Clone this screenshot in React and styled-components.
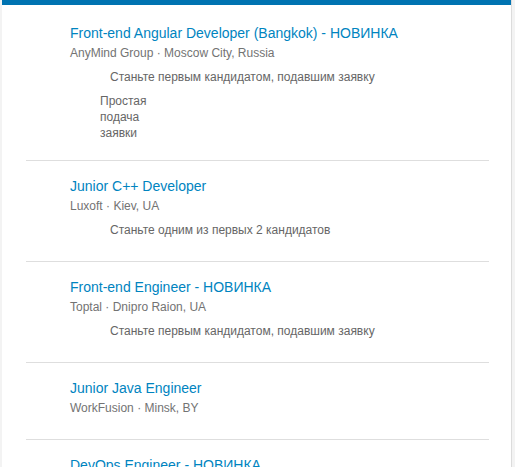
import React from 'react';
import styled, { createGlobalStyle } from 'styled-components';

const GlobalStyle = createGlobalStyle`
  html, body {
    margin: 0;
    padding: 0;
    background: #f3f3f3;
    font-family: 'Liberation Sans', Arial, sans-serif;
    overflow: hidden;
  }
`;

const Panel = styled.div`
  margin-left: 2px;
  width: 510px;
  min-height: 467px;
  background: #ffffff;
  border-right: 1px solid #dcdcdc;
  box-sizing: border-box;
`;

const TopBar = styled.div`
  height: 5px;
  background: #0073b1;
`;

const JobList = styled.ul`
  list-style: none;
  margin: 0;
  padding: 3px 0 0;
`;

const JobItem = styled.li`
  margin: 0 22px 0 24px;
  padding: 15px 0 21px 44px;
  border-bottom: 1px solid #dedede;
`;

const Title = styled.a`
  display: block;
  font-size: 14px;
  line-height: 20px;
  color: #0084bf;
  text-decoration: none;
`;

const Meta = styled.div`
  font-size: 12px;
  line-height: 20px;
  color: #737373;
`;

const Insight = styled.div`
  margin-top: 4px;
  padding-left: 40px;
  font-size: 12px;
  line-height: 20px;
  color: #666666;
`;

const EasyApply = styled.div`
  margin: 6px 0 -2px 30px;
  width: 50px;
  font-size: 12px;
  line-height: 16px;
  color: #666666;
`;

const jobs = [
  {
    title: 'Front-end Angular Developer (Bangkok) - НОВИНКА',
    company: 'AnyMind Group',
    place: 'Moscow City, Russia',
    insight: 'Станьте первым кандидатом, подавшим заявку',
    easy: true,
  },
  {
    title: 'Junior C++ Developer',
    company: 'Luxoft',
    place: 'Kiev, UA',
    insight: 'Станьте одним из первых 2 кандидатов',
  },
  {
    title: 'Front-end Engineer - НОВИНКА',
    company: 'Toptal',
    place: 'Dnipro Raion, UA',
    insight: 'Станьте первым кандидатом, подавшим заявку',
  },
  {
    title: 'Junior Java Engineer',
    company: 'WorkFusion',
    place: 'Minsk, BY',
  },
  {
    title: 'DevOps Engineer - НОВИНКА',
    company: 'EPAM Systems',
    place: 'Minsk, BY',
  },
];

const App = () => (
  <>
    <GlobalStyle />
    <Panel>
      <TopBar />
      <JobList>
        {jobs.map((job) => (
          <JobItem key={job.title}>
            <Title href="#">{job.title}</Title>
            <Meta>
              {job.company} · {job.place}
            </Meta>
            {job.insight && <Insight>{job.insight}</Insight>}
            {job.easy && <EasyApply>Простая подача заявки</EasyApply>}
          </JobItem>
        ))}
      </JobList>
    </Panel>
  </>
);

export default App;
